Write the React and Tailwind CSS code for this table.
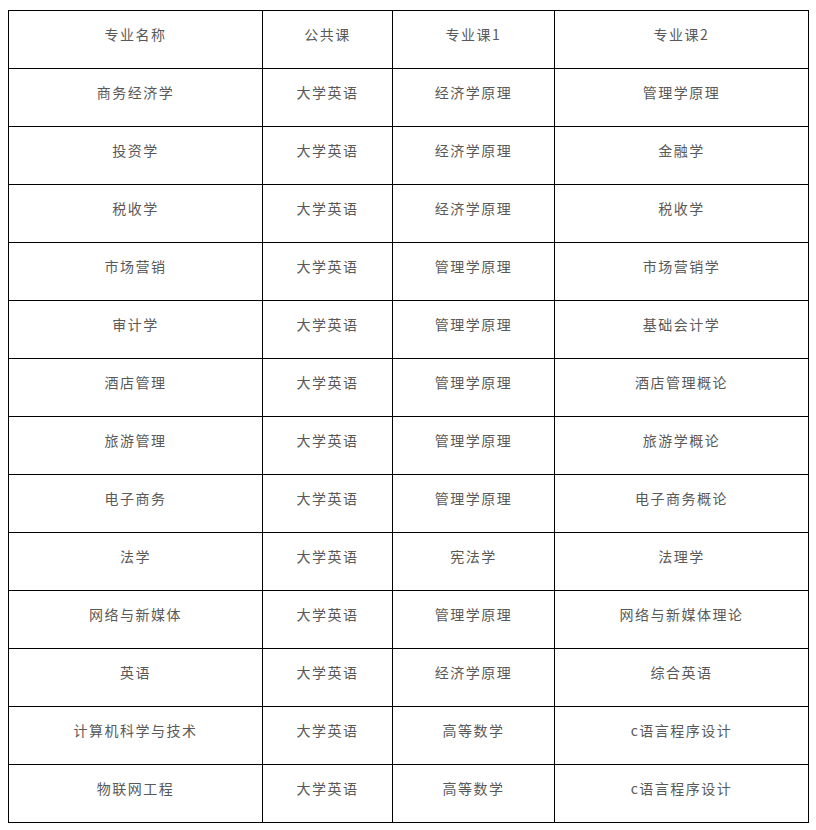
const rows = [
  ['商务经济学', '大学英语', '经济学原理', '管理学原理'],
  ['投资学', '大学英语', '经济学原理', '金融学'],
  ['税收学', '大学英语', '经济学原理', '税收学'],
  ['市场营销', '大学英语', '管理学原理', '市场营销学'],
  ['审计学', '大学英语', '管理学原理', '基础会计学'],
  ['酒店管理', '大学英语', '管理学原理', '酒店管理概论'],
  ['旅游管理', '大学英语', '管理学原理', '旅游学概论'],
  ['电子商务', '大学英语', '管理学原理', '电子商务概论'],
  ['法学', '大学英语', '宪法学', '法理学'],
  ['网络与新媒体', '大学英语', '管理学原理', '网络与新媒体理论'],
  ['英语', '大学英语', '经济学原理', '综合英语'],
  ['计算机科学与技术', '大学英语', '高等数学', 'c语言程序设计'],
  ['物联网工程', '大学英语', '高等数学', 'c语言程序设计'],
];

const header = ['专业名称', '公共课', '专业课1', '专业课2'];

const cell =
  'border border-black h-[58px] p-0 pb-[10px] text-center align-middle text-[14px] tracking-[1.5px] text-[#595959]';

export default function App() {
  return (
    <div className="bg-white w-[816px] h-[830px] pt-[10px] pl-[8px] font-['Noto_Sans_CJK_SC','Noto_Sans',sans-serif]">
      <table className="border-collapse table-fixed w-[800px]">
        <colgroup>
          <col className="w-[254px]" />
          <col className="w-[130px]" />
          <col className="w-[162px]" />
          <col className="w-[254px]" />
        </colgroup>
        <thead>
          <tr>
            {header.map((h) => (
              <th key={h} className={`${cell} font-normal`}>
                {h}
              </th>
            ))}
          </tr>
        </thead>
        <tbody>
          {rows.map((r, i) => (
            <tr key={i}>
              {r.map((c, j) => (
                <td key={j} className={cell}>
                  {c}
                </td>
              ))}
            </tr>
          ))}
        </tbody>
      </table>
    </div>
  );
}
